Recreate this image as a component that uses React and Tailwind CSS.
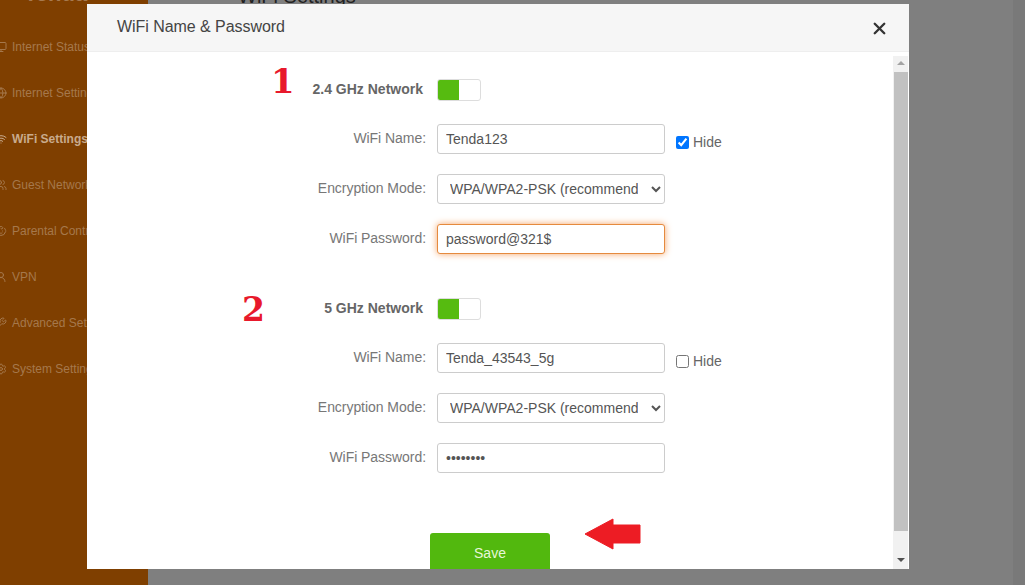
import React from 'react';
import { X, Monitor, Globe, Wifi, Users, Baby, UserRound, Wrench, Settings, ChevronDown } from 'lucide-react';

const menu = [
  { icon: Monitor, label: 'Internet Status' },
  { icon: Globe, label: 'Internet Settings' },
  { icon: Wifi, label: 'WiFi Settings', active: true },
  { icon: Users, label: 'Guest Network' },
  { icon: Baby, label: 'Parental Control' },
  { icon: UserRound, label: 'VPN' },
  { icon: Wrench, label: 'Advanced Settings' },
  { icon: Settings, label: 'System Settings' },
];

const Label = ({ children }) => (
  <label className="-mt-[2px] w-[339px] shrink-0 text-right text-[14px] tracking-[-0.05px] text-[#777]">{children}</label>
);

const TextRow = ({ label, value, type = 'text', focused, className }) => (
  <div className={`flex h-[30px] items-center ${className}`}>
    <Label>{label}</Label>
    <input
      type={type}
      defaultValue={value}
      className={`ml-[11px] h-[30px] w-[228px] rounded-[3px] border bg-white px-[8px] text-[14px] text-[#555] outline-none ${
        focused ? 'border-[#e58a3e] shadow-[0_0_7px_#f5a568]' : 'border-[#ccc]'
      }`}
    />
  </div>
);

const ModeRow = () => (
  <div className="mt-[20px] flex h-[30px] items-center">
    <Label>Encryption Mode:</Label>
    <select
      defaultValue="wpa"
      className="ml-[11px] h-[30px] w-[228px] rounded-[3px] border border-[#ccc] bg-white pl-[8px] pr-[10px] text-[14px] text-[#555] outline-none"
    >
      <option value="wpa">WPA/WPA2-PSK (recommended)</option>
      <option value="none">None</option>
    </select>
  </div>
);

const Toggle = ({ label, className }) => (
  <div className={`flex h-[22px] items-center ${className}`}>
    <div className="-mt-[2px] w-[336px] shrink-0 text-right text-[14px] font-bold text-[#666]">{label}</div>
    <div className="ml-[14px] flex h-[22px] w-[44px] overflow-hidden rounded-[3px] border border-[#ddd] bg-white">
      <div className="h-full w-[21px] bg-[#56bb10]" />
    </div>
  </div>
);

const Hide = ({ checked }) => (
  <label className="ml-[11px] mt-[6px] flex items-center gap-[4px] text-[14px] text-[#666]">
    <input type="checkbox" defaultChecked={checked} className="h-[13px] w-[13px]" />
    Hide
  </label>
);

const App = () => {
  return (
    <div className="relative flex h-[585px] w-[1025px] overflow-hidden bg-[#7f7f7f] font-['Liberation_Sans',Arial,sans-serif]">
      <aside className="w-[148px] shrink-0 bg-[#7f3f00]">
        <div className="-mt-[18px] h-[42px] pl-[24px] text-[22px] font-bold leading-[24px] text-[#a77a50]">Tenda</div>
        {menu.map((m) => (
          <div
            key={m.label}
            className={`-ml-[5px] flex h-[46px] items-center gap-[5px] whitespace-nowrap text-[12px] ${
              m.active ? 'font-bold text-[#c9ab8d]' : 'text-[#a5784c]'
            }`}
          >
            <m.icon size={12} strokeWidth={2} />
            {m.label}
          </div>
        ))}
      </aside>

      <main className="flex-1">
        <div className="-mt-[19px] flex items-center gap-[8px] pl-[66px] text-[20px] text-[#222]">
          <ChevronDown size={16} />
          WiFi Settings
        </div>
      </main>
      <div className="w-[12px] shrink-0 bg-[#797979]" />

      {/* modal sits over the dimmed page */}
      <div className="absolute left-[87px] top-[4px] flex h-[565px] w-[822px] flex-col overflow-hidden bg-white">
        <div className="flex h-[48px] shrink-0 items-center justify-between border-b border-[#eee] bg-[#f6f6f6] pl-[30px] pr-[20px]">
          <span className="-mt-[2px] text-[16px] tracking-[-0.05px] text-[#444]">WiFi Name &amp; Password</span>
          <X size={19} strokeWidth={3} className="mt-[2px] text-[#333]" />
        </div>
        <div className="flex min-h-0 flex-1">
          <div className="flex-1">
            <Toggle label="2.4 GHz Network" className="mt-[27px]" />
            <div className="mt-[23px] flex">
              <TextRow label="WiFi Name:" value="Tenda123" />
              <Hide checked />
            </div>
            <ModeRow />
            <TextRow label="WiFi Password:" value="password@321$" focused className="mt-[20px]" />

            <Toggle label="5 GHz Network" className="mt-[44px]" />
            <div className="mt-[23px] flex">
              <TextRow label="WiFi Name:" value="Tenda_43543_5g" />
              <Hide />
            </div>
            <ModeRow />
            <TextRow label="WiFi Password:" value="12345678" type="password" className="mt-[20px]" />

            <button className="ml-[343px] mt-[60px] h-[40px] w-[120px] rounded-[3px] bg-[#52b80e] text-[14px] text-[#e6f7d8]">
              Save
            </button>
          </div>
          <div className="mr-[1px] mt-[4px] flex w-[15px] flex-col items-center bg-[#f1f1f1]">
            <div className="mt-[5px] h-0 w-0 border-x-[4px] border-b-[4px] border-x-transparent border-b-[#a3a3a3]" />
            <div className="mt-[7px] h-[459px] w-[14px] bg-[#c1c1c1]" />
            <div className="mt-[27px] h-0 w-0 border-x-[4px] border-t-[4px] border-x-transparent border-t-[#505050]" />
          </div>
        </div>
      </div>

      {/* red annotations drawn on top of the screenshot */}
      <span className="absolute left-[271px] top-[60px] font-['DejaVu_Serif',serif] text-[34px] font-bold leading-[42px] text-[#e8192c]">1</span>
      <span className="absolute left-[242px] top-[289px] font-['DejaVu_Serif',serif] text-[33px] font-bold leading-[42px] text-[#e8192c]">2</span>
      <svg className="absolute left-[584px] top-[517px]" width="57" height="33" viewBox="0 0 57 33">
        <path d="M1 17 L29 2 L29 8 L56 8 L56 26 L29 26 L29 32 Z" fill="#ed1c24" stroke="#ed1c24" strokeLinejoin="round" />
      </svg>
    </div>
  );
};

export default App;
